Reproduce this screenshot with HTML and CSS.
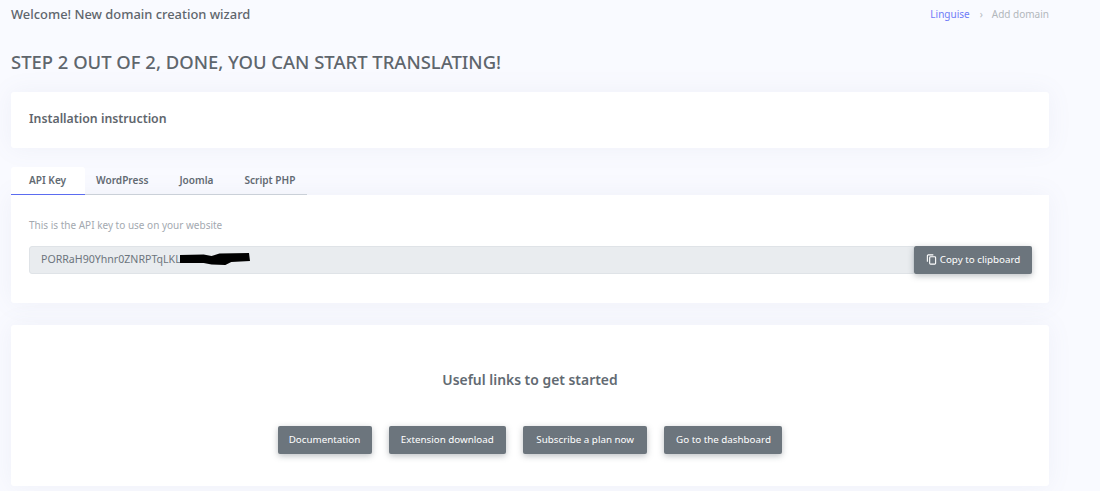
FILE: index.html
```html
<!DOCTYPE html>
<html lang="en">
<head>
<meta charset="utf-8">
<title>New domain creation wizard</title>
<link rel="stylesheet" href="styles.css">
</head>
<body>
<main class="page">
  <header class="topbar">
    <h4 class="welcome">Welcome! New domain creation wizard</h4>
    <nav class="crumbs"><a class="crumb-link">Linguise</a><span class="crumb-sep">›</span><span class="crumb-current">Add domain</span></nav>
  </header>
  <h2 class="step">STEP 2 OUT OF 2, DONE, YOU CAN START TRANSLATING!</h2>
  <section class="card card-title"><h3 class="card-heading">Installation instruction</h3></section>
  <ul class="tabs">
    <li class="tab tab-active">API Key</li>
    <li class="tab">WordPress</li>
    <li class="tab">Joomla</li>
    <li class="tab">Script PHP</li>
  </ul>
  <section class="card card-key">
    <p class="hint">This is the API key to use on your website</p>
    <div class="key-group">
      <div class="key-field"><span>PORRaH90Yhnr0ZNRPTqLKL</span><svg class="redact" width="70" height="13" viewBox="0 0 71 13"><path d="M0 2 L24 1.5 L32 3 L40 0.5 L70 0 L71 8 L52 9 L46 12 L32 11.5 L24 10 L0 10 Z" fill="#000"/></svg></div>
      <button class="btn btn-copy"><svg class="copy-icon" width="11" height="11" viewBox="0 0 24 24" fill="none" stroke="currentColor" stroke-width="2.4"><path d="M16 2H5a2 2 0 0 0-2 2v13"/><rect x="8" y="6" width="13" height="16" rx="2"/></svg>Copy to clipboard</button>
    </div>
  </section>
  <section class="card card-links">
    <h3 class="links-heading">Useful links to get started</h3>
    <div class="links">
      <a class="btn btn-docs">Documentation</a>
      <a class="btn btn-ext">Extension download</a>
      <a class="btn btn-sub">Subscribe a plan now</a>
      <a class="btn btn-dash">Go to the dashboard</a>
    </div>
  </section>
</main>
</body>
</html>
```
FILE: styles.css
```css
* { box-sizing: border-box; }
html, body { margin: 0; height: 100%; }
body {
  background: #f9faff;
  font-family: "Noto Sans", "Open Sans", sans-serif;
  color: #6c757d;
  overflow: hidden;
}
.page { width: 1038px; margin-left: 11px; }
.topbar {
  display: flex;
  justify-content: space-between;
  align-items: flex-start;
  height: 47px;
  padding-top: 6px;
}
.welcome {
  margin: 0;
  font-size: 12.9px;
  line-height: 17px;
  font-weight: 500;
  color: #5f666d;
}
.crumbs { display: flex; font-size: 10px; line-height: 14px; padding-top: 1px; }
.crumb-link { color: #6f7cf7; }
.crumb-sep { color: #b4b9bf; margin: 0 9px 0 10px; }
.crumb-current { color: #b2b7bc; }
.step {
  margin: 0;
  height: 45px;
  padding-top: 3px;
  font-size: 18.45px;
  line-height: 24px;
  font-weight: 500;
  color: #5f666d;
}
.card {
  background: #fff;
  border-radius: 3px;
  box-shadow: 0 0 24px rgba(120, 130, 170, 0.08);
}
.card-title { height: 56px; padding: 18px 18px 0; }
.card-heading { margin: 0; font-size: 12.3px; line-height: 17px; font-weight: 600; color: #5f666d; }
.tabs {
  display: flex;
  width: 296px;
  height: 28px;
  margin: 19px 0 0;
  padding: 0;
  list-style: none;
  border-bottom: 1px solid #ced4da;
}
.tab {
  padding: 0 15.5px;
  font-size: 10.1px;
  line-height: 26px;
  font-weight: 600;
  color: #626a72;
  white-space: nowrap;
}
.tab-active {
  flex: none;
  width: 74px;
  padding: 0 18px;
  height: 28px;
  background: #fff;
  border-bottom: 1px solid #5b6cf0;
  border-radius: 3px 3px 0 0;
}
.tab-active + .tab { padding-left: 11px; }
.card-key { height: 108px; padding: 23px 17px 0 18px; border-radius: 0 0 3px 3px; }
.hint { margin: 0 0 14px; font-size: 10px; line-height: 14px; color: #a3a9b0; }
.key-group { display: flex; height: 28px; }
.key-field {
  flex: 1;
  display: flex;
  align-items: center;
  padding: 0 0 2px 11px;
  background: #e9ecef;
  border: 1px solid #dfe3e7;
  border-radius: 3px 0 0 3px;
  font-size: 10.6px;
  color: #6c757d;
}
.redact { flex: none; margin-left: -1px; }
.btn {
  display: inline-flex;
  align-items: center;
  justify-content: center;
  height: 28px;
  padding: 0 0 2px;
  background: #6c757d;
  color: #fff;
  border: 0;
  border-radius: 2px;
  font-family: inherit;
  font-size: 9.8px;
  white-space: nowrap;
  box-shadow: 0 2px 6px rgba(90, 98, 104, 0.4);
}
.btn-copy { width: 118px; }
.btn-docs { width: 94px; }
.btn-ext { width: 117px; }
.btn-sub { width: 124px; }
.btn-dash { width: 118px; }
.copy-icon { margin-right: 3px; }
.card-links { height: 161px; margin-top: 22px; padding-top: 46px; }
.links-heading {
  margin: 0;
  text-align: center;
  font-size: 13.9px;
  line-height: 18px;
  font-weight: 600;
  color: #626a72;
}
.links { display: flex; justify-content: center; gap: 17.33px; margin-top: 37px; }
```
